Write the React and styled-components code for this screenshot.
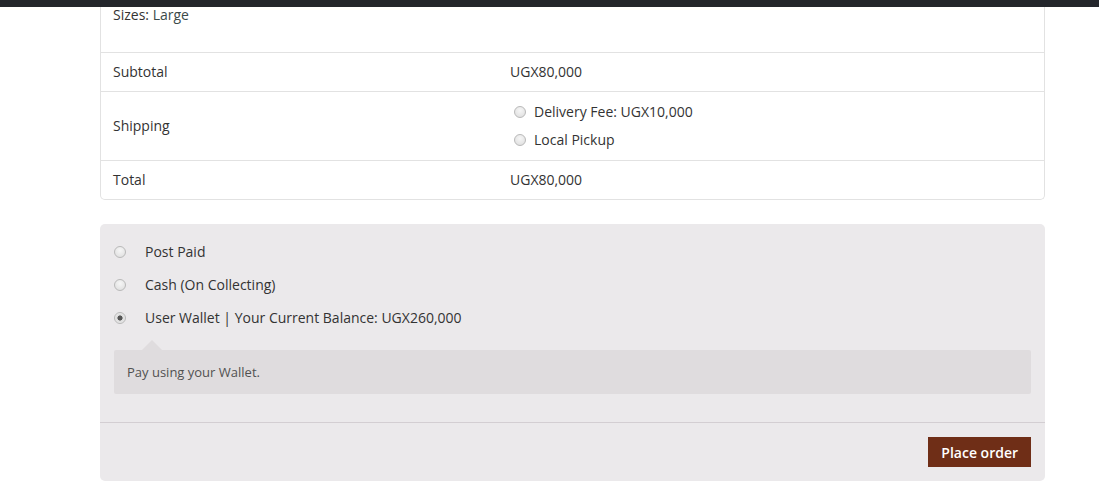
import React from "react"
import styled, { createGlobalStyle } from "styled-components"

const GlobalStyle = createGlobalStyle`
  html, body {
    margin: 0;
    padding: 0;
    background: #fff;
  }
  body {
    font-family: "Open Sans", "Liberation Sans", sans-serif;
    font-size: 14px;
    color: #333;
  }
`

const App = () => {
  return (
    <>
      <GlobalStyle />
      <TopBar />
      <Page>
        <OrderTable>
          <Row $tall>
            <Cell $first>
              Sizes: <Muted>Large</Muted>
            </Cell>
            <Cell />
          </Row>
          <Row>
            <Cell>Subtotal</Cell>
            <Cell>UGX80,000</Cell>
          </Row>
          <Row $pad={6}>
            <Cell>Shipping</Cell>
            <Cell>
              <ShipList>
                <ShipItem>
                  <Radio />
                  Delivery Fee: UGX10,000
                </ShipItem>
                <ShipItem>
                  <Radio />
                  Local Pickup
                </ShipItem>
              </ShipList>
            </Cell>
          </Row>
          <Row $last>
            <Cell>Total</Cell>
            <Cell>UGX80,000</Cell>
          </Row>
        </OrderTable>

        <Payment>
          <Methods>
            <Method>
              <Radio />
              Post Paid
            </Method>
            <Method>
              <Radio />
              Cash (On Collecting)
            </Method>
            <Method>
              <Radio $checked />
              User Wallet | Your Current Balance: UGX260,000
            </Method>
          </Methods>
          <Description>Pay using your Wallet.</Description>
          <PlaceOrder>
            <Button>Place order</Button>
          </PlaceOrder>
        </Payment>
      </Page>
    </>
  )
}

export default App

const TopBar = styled.div`
  position: fixed;
  top: 0;
  left: 0;
  right: 0;
  height: 7px;
  background: #23262b;
  z-index: 10;
`

const Page = styled.div`
  width: 945px;
  margin: 0 0 0 100px;
  padding-bottom: 20px;
`

const OrderTable = styled.div`
  border: 1px solid #e2e2e2;
  border-top: none;
  border-radius: 0 0 5px 5px;
`

const Row = styled.div`
  display: grid;
  grid-template-columns: 397px 1fr;
  min-height: ${(p) => (p.$tall ? "52px" : "38px")};
  padding: ${(p) => (p.$pad ? `${p.$pad}px 0` : "0")};
  border-bottom: ${(p) => (p.$last ? "none" : "1px solid #e2e2e2")};
  align-items: ${(p) => (p.$tall ? "start" : "center")};
  line-height: 20px;
`

const Cell = styled.div`
  padding: ${(p) => (p.$first ? "5px 12px 0" : "0 12px")};
`

const Muted = styled.span`
  color: #3b4a4a;
`

const ShipList = styled.ul`
  list-style: none;
  margin: 0;
  padding: 0 0 0 4px;
`

const ShipItem = styled.li`
  display: flex;
  align-items: center;
  gap: 8px;
  height: 28px;
`

const Radio = styled.span`
  display: inline-block;
  flex: none;
  width: 12px;
  height: 12px;
  border-radius: 50%;
  box-sizing: border-box;
  border: 1px solid #b9b9b9;
  background: ${(p) =>
    p.$checked
      ? "radial-gradient(circle, #555 0 2.3px, #dcdcdc 2.8px, #f4f4f4 100%)"
      : "radial-gradient(circle at 50% 35%, #f6f6f6 0, #dcdcdc 100%)"};
`

const Payment = styled.div`
  margin-top: 24px;
  background: #ebe9eb;
  border-radius: 5px;
`

const Methods = styled.ul`
  list-style: none;
  margin: 0;
  padding: 11px 14px 0;
`

const Method = styled.li`
  display: flex;
  align-items: center;
  gap: 19px;
  height: 33px;
  font-size: 14px;
  color: #333;
`

const Description = styled.div`
  position: relative;
  margin: 16px 14px 0;
  padding: 0 13px;
  height: 44px;
  display: flex;
  align-items: center;
  background: #dfdcde;
  border-radius: 2px;
  font-size: 13px;
  color: #515151;

  &::before {
    content: "";
    position: absolute;
    top: -10px;
    left: 28px;
    border: 10px solid transparent;
    border-top: none;
    border-bottom-color: #dfdcde;
  }
`

const PlaceOrder = styled.div`
  margin-top: 28px;
  border-top: 1px solid #d3ced2;
  padding: 14px;
  display: flex;
  justify-content: flex-end;
`

const Button = styled.button`
  height: 30px;
  padding: 0 13px;
  border: none;
  border-radius: 0;
  background: #6f2e17;
  color: #fff;
  font-family: "Open Sans", "Liberation Sans", sans-serif;
  font-size: 14px;
  font-weight: 600;
  cursor: pointer;
`
